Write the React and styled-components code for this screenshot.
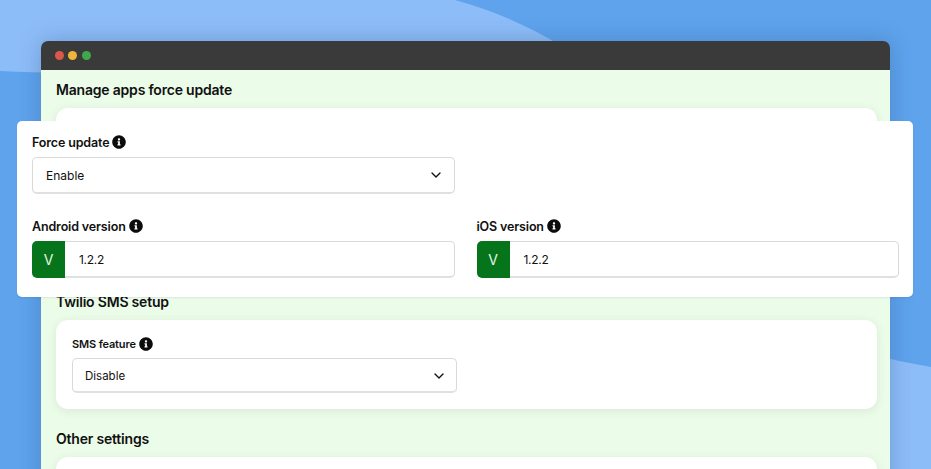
import styled, { createGlobalStyle } from 'styled-components';
import { ChevronDown } from 'lucide-react';
import { FaInfoCircle } from 'react-icons/fa';

const GlobalStyle = createGlobalStyle`
	html, body {
		margin: 0;
		padding: 0;
		height: 100%;
		overflow: hidden;
	}
	body {
		font-family: 'Inter', 'Liberation Sans', sans-serif;
		color: #111;
	}
`;

const Field = ({ label, small, children }) => (
	<div>
		<Label small={small}>
			{label}
			<FaInfoCircle size={14} color="#0c0c0c" />
		</Label>
		{children}
	</div>
);

const Select = ({ value, small }) => (
	<SelectBox small={small}>
		{value}
		<ChevronDown size={16} strokeWidth={2} color="#111" />
	</SelectBox>
);

const VersionInput = ({ value }) => (
	<InputBox>
		<Prefix>V</Prefix>
		<InputValue>{value}</InputValue>
	</InputBox>
);

const App = () => {
	return (
		<Page>
			<GlobalStyle />
			<Blobs viewBox="0 0 931 469" aria-hidden="true">
				<path d="M0 0H455Q510 15 560 45L540 90H60V73Q20 72 0 71Z" fill="#8dbdf8" />
				<path d="M870 354Q900 362 931 367V469H870Z" fill="#8dbdf8" />
			</Blobs>
			<Window>
				<TitleBar>
					<Dot color="#d9584a" />
					<Dot color="#eeb53a" />
					<Dot color="#3fa84a" />
				</TitleBar>
				<Body>
					<Heading>Manage apps force update</Heading>
					<Card height={164} />
					<Heading>Twilio SMS setup</Heading>
					<Card>
						<Columns gap={20}>
							<Field label="SMS feature" small>
								<Select value="Disable" small />
							</Field>
						</Columns>
					</Card>
					<Heading>Other settings</Heading>
					<Card height={120} />
				</Body>
			</Window>
			<FloatingCard>
				<Columns gap={22}>
					<Field label="Force update">
						<Select value="Enable" />
					</Field>
				</Columns>
				<Columns gap={22}>
					<Field label="Android version">
						<VersionInput value="1.2.2" />
					</Field>
					<Field label="iOS version">
						<VersionInput value="1.2.2" />
					</Field>
				</Columns>
			</FloatingCard>
		</Page>
	);
};

const Page = styled.div`
	position: relative;
	height: 469px;
	padding: 41px 41px 0;
	box-sizing: border-box;
	overflow: hidden;
	background: #5ea3ec;
`;

const Blobs = styled.svg`
	position: absolute;
	top: 0;
	left: 0;
	width: 931px;
	height: 469px;
`;

const Window = styled.div`
	position: relative;
	border-radius: 7px 7px 0 0;
	overflow: hidden;
	box-shadow: 0 0 22px rgba(30, 60, 110, 0.28);
`;

const TitleBar = styled.div`
	display: flex;
	align-items: center;
	gap: 4.5px;
	height: 29px;
	padding-left: 13.5px;
	background: #3a3a3a;
`;

const Dot = styled.span`
	width: 9px;
	height: 9px;
	border-radius: 50%;
	background: ${props => props.color};
`;

const Body = styled.div`
	padding: 11px 13px 0 15px;
	background: #ebfce8;
`;

const Heading = styled.h2`
	margin: 0 0 9px;
	font-size: 14px;
	line-height: 18px;
	font-weight: 600;
	letter-spacing: -0.2px;
`;

const Card = styled.div`
	height: ${props => (props.height ? `${props.height}px` : 'auto')};
	margin-bottom: 21px;
	padding: 16px;
	box-sizing: border-box;
	border-radius: 12px;
	background: #fff;
	box-shadow: 0 2px 10px rgba(60, 90, 60, 0.1);
`;

const FloatingCard = styled.div`
	position: absolute;
	top: 121px;
	left: 17px;
	width: 896px;
	height: 176px;
	padding: 13px 14px 0 15px;
	box-sizing: border-box;
	border-radius: 5px;
	background: #fff;
	box-shadow: 0 1px 2px rgba(40, 60, 90, 0.1);
`;

const Columns = styled.div`
	display: grid;
	grid-template-columns: 1fr 1fr;
	gap: ${props => props.gap}px;
	margin-bottom: 24px;

	${Card} & {
		margin-bottom: 0;
	}
`;

const Label = styled.div`
	display: flex;
	align-items: center;
	gap: 3px;
	height: 16px;
	margin-bottom: ${props => (props.small ? '6px' : '7px')};
	font-size: ${props => (props.small ? '11px' : '12.5px')};
	font-weight: 600;
	letter-spacing: -0.15px;
	color: #111;
`;

const SelectBox = styled.div`
	display: flex;
	align-items: center;
	justify-content: space-between;
	height: ${props => (props.small ? '35px' : '37px')};
	padding: ${props => (props.small ? '1px 8.5px 0 12px' : '0 10px 0 13px')};
	box-sizing: border-box;
	border: 1px solid #d9d9d9;
	border-bottom: 2px solid #e0e0e0;
	border-radius: 5px;
	background: #fff;
	font-size: ${props => (props.small ? '11.5px' : '12px')};
`;

const InputBox = styled.div`
	display: flex;
	align-items: stretch;
	height: 37px;
`;

const Prefix = styled.div`
	display: flex;
	align-items: center;
	justify-content: center;
	width: 33px;
	border-radius: 5px 0 0 5px;
	background: #05741b;
	color: #e6f5e6;
	font-size: 14px;
`;

const InputValue = styled.div`
	display: flex;
	flex: 1;
	align-items: center;
	padding-left: 14px;
	border: 1px solid #d9d9d9;
	border-bottom: 2px solid #e0e0e0;
	border-left: 0;
	border-radius: 0 5px 5px 0;
	font-size: 12px;
	letter-spacing: -0.3px;
`;

export default App;
